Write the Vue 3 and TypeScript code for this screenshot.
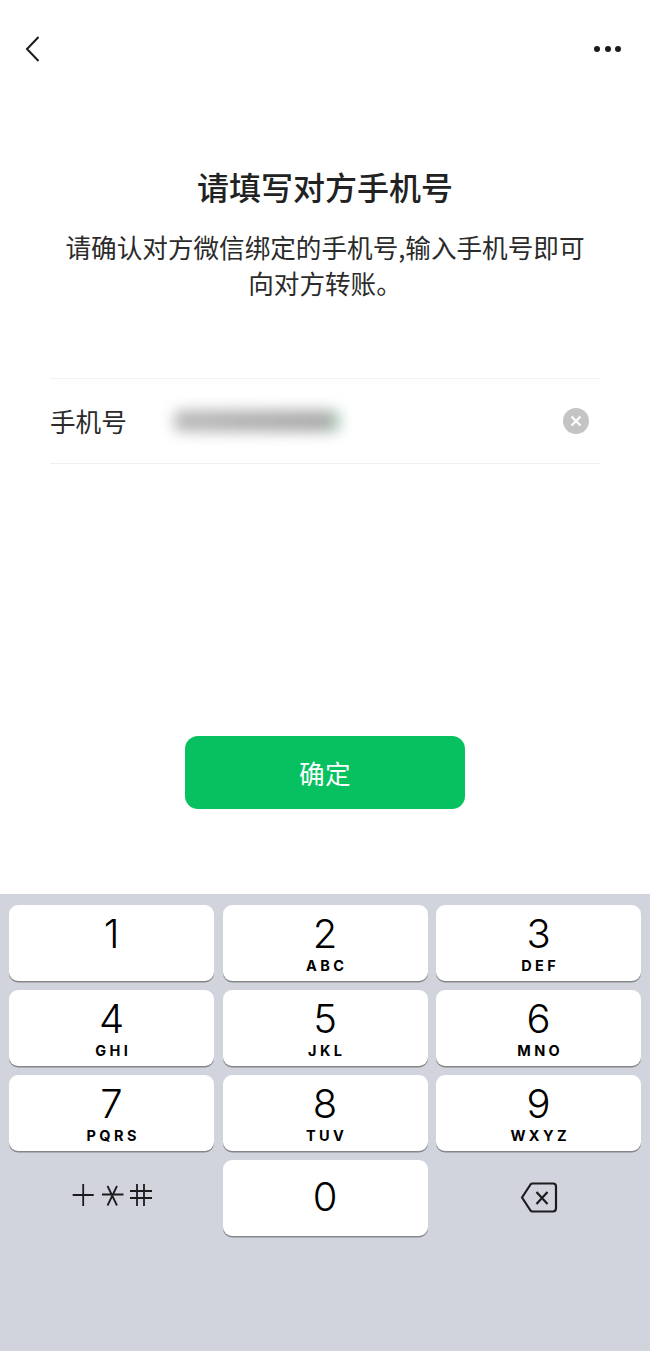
<script setup lang="ts">
interface Key { digit: string; letters: string }
const keys: Key[] = [
  { digit: '1', letters: '' },
  { digit: '2', letters: 'ABC' },
  { digit: '3', letters: 'DEF' },
  { digit: '4', letters: 'GHI' },
  { digit: '5', letters: 'JKL' },
  { digit: '6', letters: 'MNO' },
  { digit: '7', letters: 'PQRS' },
  { digit: '8', letters: 'TUV' },
  { digit: '9', letters: 'WXYZ' },
]
</script>

<template>
  <div class="page">
    <header class="nav">
      <svg class="back" width="18" height="28" viewBox="0 0 18 28" fill="none">
        <path d="M14.5 1 L3 13 L14.5 25" stroke="#1b1b1b" stroke-width="2" />
      </svg>
      <div class="dots"><i></i><i></i><i></i></div>
    </header>

    <section class="intro">
      <h1 class="title">请填写对方手机号</h1>
      <p class="desc">请确认对方微信绑定的手机号,输入手机号即可<br />向对方转账。</p>
    </section>

    <div class="field">
      <span class="label">手机号</span>
      <div class="blurred"></div>
      <span class="clear">
        <svg width="12" height="12" viewBox="0 0 12 12" fill="none">
          <path d="M1.5 1.5 L10.5 10.5 M10.5 1.5 L1.5 10.5" stroke="#fff" stroke-width="2.2" />
        </svg>
      </span>
    </div>

    <div class="action">
      <button class="confirm" type="button">确定</button>
    </div>

    <section class="keyboard">
      <div class="grid">
        <div v-for="k in keys" :key="k.digit" class="key">
          <span class="digit">{{ k.digit }}</span>
          <span v-if="k.letters" class="letters">{{ k.letters }}</span>
        </div>
        <div class="plain symbols">
          <svg width="82" height="24" viewBox="0 0 82 24" fill="none" stroke="#1c1c1e" stroke-width="1.8">
            <path d="M1.700 12 H22.700 M12.200 1 V23" />
            <path d="M31 11.500 H52.500 M36.500 3 L46 22.500 M46 3 L36.500 22.500" />
            <path d="M59 8 H81 M59 15 H81 M66 1 V23 M73 1 V23" />
          </svg>
        </div>
        <div class="key zero"><span class="digit">0</span></div>
        <div class="plain backspace">
          <svg width="38" height="32" viewBox="0 0 38 32" fill="none" stroke="#1c1c1e" stroke-width="2.200">
            <path d="M12.500 1.500 H33 Q36 1.500 36 4.500 V26 Q36 29.500 33 29.500 H12.500 Q11.300 29.500 10.500 28.500 L2 15.500 L10.500 2.500 Q11.300 1.500 12.500 1.500 Z" stroke-linejoin="round" />
            <path d="M16.500 10 L27.500 22 M27.500 10 L16.500 22" />
          </svg>
        </div>
      </div>
    </section>
  </div>
</template>

<style scoped>
.page {
  width: 650px;
  height: 1351px;
  display: flex;
  flex-direction: column;
  background: #fff;
  font-family: "Noto Sans CJK SC", "Noto Sans", sans-serif;
  color: #1c1c1c;
  overflow: hidden;
}
.nav {
  padding: 35px 29px 0 24px;
  height: 29px;
  display: flex;
  justify-content: space-between;
  align-items: center;
}
.back { display: block; }
.dots { display: flex; gap: 4.500px; margin-top: -1px; }
.dots i {
  display: block;
  width: 6px;
  height: 6px;
  border-radius: 50%;
  background: #1b1b1b;
}
.intro {
  margin-top: 100px;
  text-align: center;
}
.title {
  margin: 0;
  font-size: 32px;
  line-height: 44px;
  font-weight: 500;
  color: #222;
}
.desc {
  margin: 21px 0 0;
  font-size: 25.600px;
  line-height: 36px;
  font-weight: 400;
  color: #2b2b2b;
}
.field {
  margin: 77px 50px 0;
  height: 84px;
  border-top: 1px solid #f2f2f2;
  border-bottom: 1px solid #f0f0f0;
  display: flex;
  align-items: center;
}
.label {
  width: 124px;
  font-size: 25.600px;
  line-height: 36px;
  color: #2b2b2b;
}
.blurred {
  width: 166px;
  height: 22px;
  border-radius: 6px;
  background: linear-gradient(90deg, #bbb 0%, #b2b2b2 40%, #aaa 90%, #a8d0b8 100%);
  filter: blur(7px);
}
.clear {
  margin-left: auto;
  margin-right: 11px;
  width: 26px;
  height: 26px;
  border-radius: 50%;
  background: #c4c4c4;
  display: flex;
  align-items: center;
  justify-content: center;
}
.action {
  margin-top: 272px;
  display: flex;
  justify-content: center;
}
.confirm {
  width: 280px;
  height: 73px;
  border: none;
  border-radius: 13px;
  background: #07c160;
  color: #fff;
  font-family: inherit;
  font-size: 25.600px;
  font-weight: 400;
  letter-spacing: 0.500px;
}
.keyboard {
  margin-top: 85px;
  flex: 1;
  background: #d1d4dd;
  padding: 11px 9px 0;
}
.grid {
  display: grid;
  grid-template-columns: 205px 205px 205px;
  column-gap: 8.500px;
  grid-auto-rows: 75.500px;
  row-gap: 9.500px;
}
.key {
  background: #fff;
  border-radius: 9px;
  box-shadow: 0 1.500px 0 #85868a;
  display: flex;
  flex-direction: column;
  align-items: center;
  font-family: Inter, "Liberation Sans", sans-serif;
  color: #000;
}
.digit {
  margin-top: 5px;
  font-size: 40px;
  line-height: 48px;
  font-weight: 300;
}
.key.zero .digit { margin-top: 13px; }
.letters {
  margin-top: -1px;
  font-size: 14.500px;
  line-height: 17px;
  font-weight: 700;
  letter-spacing: 3.400px;
  margin-right: -3.400px;
}
.plain {
  display: flex;
  align-items: center;
  justify-content: center;
}
.symbols { padding-bottom: 6px; }
</style>
